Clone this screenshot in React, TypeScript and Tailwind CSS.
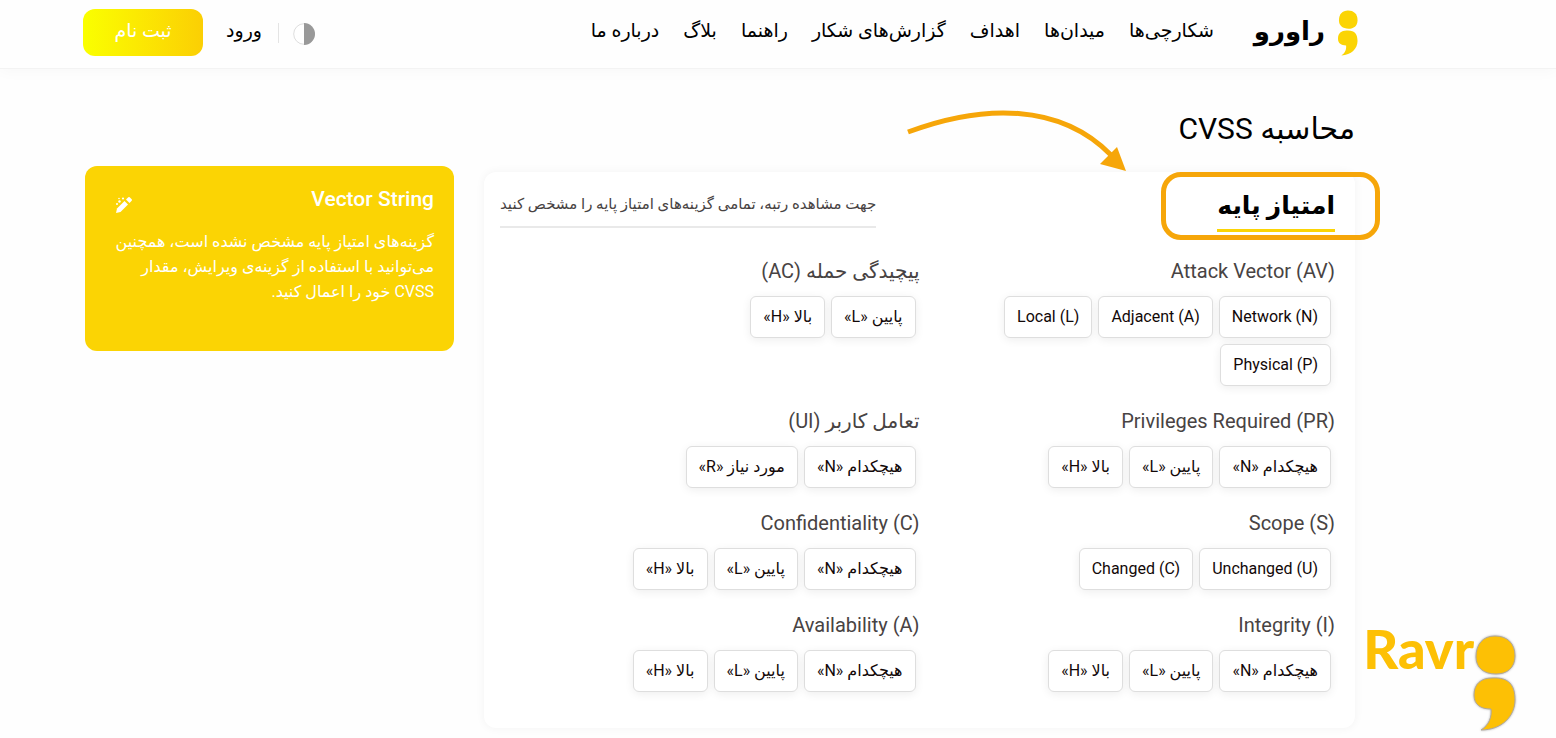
import { useState } from "react";

const navItems = [
  "شکارچی‌ها",
  "میدان‌ها",
  "اهداف",
  "گزارش‌های شکار",
  "راهنما",
  "بلاگ",
  "درباره ما",
];

interface Option {
  value: string;
  label: string;
}

interface Metric {
  id: string;
  title: string;
  options: Option[];
}

const none = { value: "N", label: "هیچکدام «N»" };
const low = { value: "L", label: "پایین «L»" };
const high = { value: "H", label: "بالا «H»" };

const metrics: Metric[] = [
  {
    id: "AV",
    title: "Attack Vector (AV)",
    options: [
      { value: "N", label: "Network (N)" },
      { value: "A", label: "Adjacent (A)" },
      { value: "L", label: "Local (L)" },
      { value: "P", label: "Physical (P)" },
    ],
  },
  { id: "AC", title: "پیچیدگی حمله (AC)", options: [low, high] },
  { id: "PR", title: "Privileges Required (PR)", options: [none, low, high] },
  {
    id: "UI",
    title: "تعامل کاربر (UI)",
    options: [none, { value: "R", label: "مورد نیاز «R»" }],
  },
  {
    id: "S",
    title: "Scope (S)",
    options: [
      { value: "U", label: "Unchanged (U)" },
      { value: "C", label: "Changed (C)" },
    ],
  },
  { id: "C", title: "Confidentiality (C)", options: [none, low, high] },
  { id: "I", title: "Integrity (I)", options: [none, low, high] },
  { id: "A", title: "Availability (A)", options: [none, low, high] },
];

// English labels stay left-to-right so that their closing bracket is last
function Label({ text }: { text: string }) {
  return <bdi dir="auto">{text}</bdi>;
}

function Semicolon({ className }: { className: string }) {
  return (
    <svg viewBox="0 0 42 96" className={className} aria-hidden="true">
      <path d="M21 1C33 1 41 8 41 21C41 33 33 39 22 39C10 39 2 33 2 22C2 9 9 1 21 1Z" />
      <path d="M18 43C35 42 41 50 41 65C41 81 28 95 7 95C15 90 18 82 17 74C7 74 0 70 0 60C0 49 7 43 18 43Z" />
    </svg>
  );
}

function Header() {
  return (
    <header className="flex h-[69px] items-center border-b border-[#f3f3f3] pr-[198px] pb-[3px] pl-[83px] shadow-[0_2px_14px_rgba(0,0,0,0.03)]">
      <a href="#" className="flex items-center gap-[13px]">
        <Semicolon className="h-[46px] w-5 fill-[#fbd404]" />
        <span className="pb-1 text-[26px] leading-10 font-bold">راورو</span>
      </a>
      <nav className="mr-10 flex gap-6 pb-[2px]">
        {navItems.map((item) => (
          <a key={item} href="#" className="text-[19px] whitespace-nowrap">
            {item}
          </a>
        ))}
      </nav>
      <div className="mr-auto flex items-center">
        <button type="button" aria-label="تغییر پوسته" className="mt-[2px]">
          <svg viewBox="0 0 22 22" className="h-[22px] w-[22px]">
            <circle cx="11" cy="11" r="10.3" fill="#fff" stroke="#dedede" />
            <path d="M11 0a11 11 0 0 1 0 22z" fill="#999" />
          </svg>
        </button>
        <span className="mr-[14px] h-5 w-px bg-[#e4e4e4]" />
        <a href="#" className="mr-4 pb-[2px] text-[19px]">
          ورود
        </a>
        <a
          href="#"
          className="mr-[23px] flex h-[47px] w-[120px] items-center justify-center rounded-xl bg-linear-to-r from-[#faff00] to-[#fbcf04] pb-[2px] text-[19px] text-white"
        >
          ثبت نام
        </a>
      </div>
    </header>
  );
}

function MetricGroup({ metric }: { metric: Metric }) {
  const [selected, setSelected] = useState<string | null>(null);

  return (
    <section aria-labelledby={metric.id}>
      <h3 id={metric.id} className="h-[30px] text-xl leading-[30px] text-[#484343]">
        <Label text={metric.title} />
      </h3>
      <div className="mt-[10px] flex flex-wrap gap-[6px] pr-1">
        {metric.options.map((option) => (
          <button
            key={option.value}
            type="button"
            aria-pressed={selected === option.value}
            onClick={() => setSelected(option.value)}
            className="h-[42px] rounded-md border border-[#dedede] bg-white px-3 text-base whitespace-nowrap text-[#120808] shadow-[0_2px_10px_rgba(0,0,0,0.07)] aria-pressed:border-[#fbd404]"
          >
            <Label text={option.label} />
          </button>
        ))}
      </div>
    </section>
  );
}

function ScoreCard() {
  return (
    <section className="relative min-w-0 flex-1 rounded-xl bg-white px-5 pb-9 shadow-[0_0_10px_rgba(0,0,0,0.05)]">
      <svg
        viewBox="0 0 220 64"
        className="absolute -top-[63px] right-[228px] h-16 w-[220px]"
        aria-hidden="true"
      >
        <path
          d="M1 23C76 -5 153 -6 204 46"
          fill="none"
          stroke="#f6a609"
          strokeWidth="5"
        />
        <path d="M210 38L219 62L193 55Z" fill="#f6a609" />
      </svg>
      <div className="absolute top-0 -right-[25px] h-[68px] w-[219px] rounded-[20px] border-5 border-[#f6a609]" />

      <div className="-ml-1 flex items-start justify-between">
        <h2 className="mt-[14px] border-b-3 border-[#fbd404] pb-[3px] text-[25px] leading-10 font-bold">
          امتیاز پایه
        </h2>
        <p className="mt-[17px] border-b-2 border-[#e9e9e9] pb-[7px] text-[15px] leading-[30px] text-[#484343]">
          جهت مشاهده رتبه، تمامی گزینه‌های امتیاز پایه را مشخص کنید
        </p>
      </div>

      <div className="mt-6 grid grid-cols-2 gap-y-5">
        {metrics.map((metric) => (
          <MetricGroup key={metric.id} metric={metric} />
        ))}
      </div>
    </section>
  );
}

function VectorCard() {
  return (
    <aside className="-mt-[6px] h-[185px] w-[369px] shrink-0 rounded-xl bg-[#fbd404] px-5 pt-[15px] text-white">
      <div className="flex items-center justify-between">
        <h2 className="text-[21px] leading-9 font-medium">Vector String</h2>
        <button type="button" aria-label="ویرایش" className="mt-3 ml-[10px]">
          <svg viewBox="0 0 18 18" className="h-[18px] w-[18px] fill-white">
            <path d="M1 17L2 12.500L9.500 5L13 8.500L5.500 16Z" />
            <path d="M11 3.500L13.300 1.300Q14 .7 14.700 1.300L16.700 3.300Q17.300 4 16.700 4.700L14.500 7Z" />
            <circle cx="2" cy="8" r="1" />
            <circle cx="4.500" cy="5.500" r="1.200" />
            <circle cx="8" cy="2.500" r="1.100" />
            <circle cx="4" cy="2.500" r=".8" />
          </svg>
        </button>
      </div>
      <p className="mt-3 text-base leading-[25px]">
        گزینه‌های امتیاز پایه مشخص نشده است، همچنین می‌توانید با استفاده از
        گزینه‌ی ویرایش، مقدار CVSS خود را اعمال کنید.
      </p>
    </aside>
  );
}

export default function App() {
  return (
    <div
      dir="rtl"
      className="relative min-h-screen bg-[#fefefe] font-['Roboto','DejaVu_Sans',sans-serif] text-black"
    >
      <Header />
      <main className="pt-10 pr-[201px] pb-[10px] pl-[85px]">
        <h1 className="h-10 text-[30px] leading-10">محاسبه CVSS</h1>
        <div className="mt-[23px] flex items-start gap-[30px]">
          <ScoreCard />
          <VectorCard />
        </div>
      </main>
      <div dir="ltr" className="absolute right-10 bottom-[7px] flex">
        <span className="font-['Lato',sans-serif] text-[54px] leading-[52px] font-black text-[#fdc005]">
          Ravr
        </span>
        <Semicolon className="mt-3 h-24 w-[42px] overflow-visible fill-[#fdc005] stroke-[#b0a79a] stroke-1 drop-shadow-[0_0_1px_rgba(0,0,0,0.3)]" />
      </div>
    </div>
  );
}
